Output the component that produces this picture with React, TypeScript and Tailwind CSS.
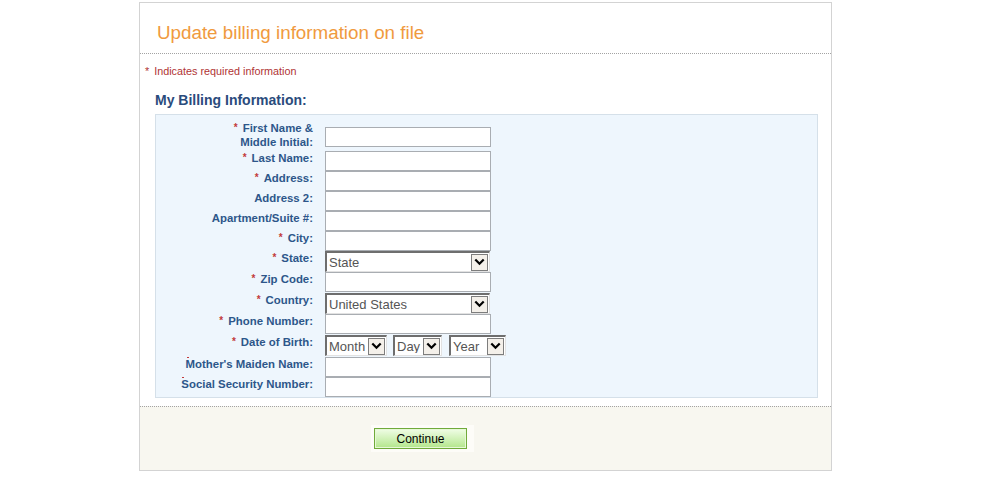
import React from 'react';

const Req = () => (
  <span className="text-[10px] text-[#c23a3a] mr-[5px] align-[1px]">*</span>
);

const TextBox = () => (
  <div className="w-[166px] h-[20px] border border-[#a9adb2] bg-white" />
);

interface SelectProps {
  value: string;
  width: string;
}

const FakeSelect = ({ value, width }: SelectProps) => {
  return (
    <div
      className={`${width} h-[21px] flex items-center bg-white border-t-2 border-l-2 border-r border-b border-t-[#6e6e6e] border-l-[#6e6e6e] border-r-[#e2e2e2] border-b-[#e2e2e2]`}
    >
      <span className="flex-1 pl-[2px] text-[13px] leading-none text-[#555] whitespace-nowrap overflow-hidden">
        {value}
      </span>
      <span className="w-[17px] h-[17px] mr-px flex items-center justify-center border border-[#7d7d7d] bg-[#f4f0ea]">
        <svg width="11" height="8" viewBox="0 0 11 8">
          <path d="M1.3 1.5 L5.5 5.8 L9.7 1.5" fill="none" stroke="#000" strokeWidth="2.2" />
        </svg>
      </span>
    </div>
  );
};

interface RowProps {
  label: React.ReactNode;
  required?: boolean;
  height: string;
  children: React.ReactNode;
}

const Row = ({ label, required, height, children }: RowProps) => (
  <div className={`flex items-start gap-[12px] ${height}`}>
    <div className="w-[157px] text-right font-bold text-[11.4px] leading-[14px] text-[#2d568a] whitespace-nowrap">
      {required && <Req />}
      {label}
    </div>
    {children}
  </div>
);

const HiddenMark = ({ children }: { children: React.ReactNode }) => (
  <span className="relative">
    <span className="absolute left-[1px] top-[-1px] w-[2px] h-[1px] bg-[#c23a3a]" />
    {children}
  </span>
);

export default function App() {
  return (
    <div className="min-h-screen bg-white font-['Liberation_Sans',Arial,sans-serif]">
      <div className="ml-[139px] pt-[2px] w-[693px]">
        <div className="border border-[#d3d3d3] bg-white">
          <div className="h-[51px] pl-[17px] pt-[19px] border-b border-dotted border-[#a3a3a3]">
            <h1 className="text-[18.8px] leading-[22px] text-[#f09a3e]">
              Update billing information on file
            </h1>
          </div>

          <p className="mt-[11px] pl-[5px] text-[10.8px] leading-[13px] text-[#b03434]">
            <span className="mr-[5px]">*</span>Indicates required information
          </p>

          <h2 className="mt-[14px] pl-[15px] text-[14px] leading-[16px] font-bold text-[#2a4b7c]">
            My Billing Information:
          </h2>

          <div className="mt-[6px] ml-[15px] w-[663px] border border-[#d5e0e9] bg-[#eef6fd] pt-[6px]">
            <div className="flex items-start gap-[12px] h-[30px]">
              <div className="w-[157px] text-right font-bold text-[11.4px] leading-[14px] text-[#2d568a]">
                <Req />
                First Name &amp;
                <br />
                Middle Initial:
              </div>
              <div className="mt-[6px]">
                <TextBox />
              </div>
            </div>
            <Row label="Last Name:" required height="h-[20px]">
              <TextBox />
            </Row>
            <Row label="Address:" required height="h-[20px]">
              <TextBox />
            </Row>
            <Row label="Address 2:" height="h-[20px]">
              <TextBox />
            </Row>
            <Row label="Apartment/Suite #:" height="h-[20px]">
              <TextBox />
            </Row>
            <Row label="City:" required height="h-[20px]">
              <TextBox />
            </Row>
            <Row label="State:" required height="h-[21px]">
              <FakeSelect value="State" width="w-[165px]" />
            </Row>
            <Row label="Zip Code:" required height="h-[21px]">
              <TextBox />
            </Row>
            <Row label="Country:" required height="h-[21px]">
              <FakeSelect value="United States" width="w-[165px]" />
            </Row>
            <Row label="Phone Number:" required height="h-[21px]">
              <TextBox />
            </Row>
            <Row label="Date of Birth:" required height="h-[22px]">
              <div className="flex items-start">
                <FakeSelect value="Month" width="w-[62px]" />
                <div className="ml-[6px]">
                  <FakeSelect value="Day" width="w-[49px]" />
                </div>
                <div className="ml-[7px]">
                  <FakeSelect value="Year" width="w-[57px]" />
                </div>
              </div>
            </Row>
            <Row label={<HiddenMark>Mother's Maiden Name:</HiddenMark>} height="h-[20px]">
              <TextBox />
            </Row>
            <Row label={<HiddenMark>Social Security Number:</HiddenMark>} height="h-[20px]">
              <TextBox />
            </Row>
          </div>

          <div className="mt-[8px] h-[64px] border-t border-dotted border-[#a3a3a3] bg-[#f8f7f0] pt-[18px]">
            <div className="ml-[231px] w-[103px] p-[3px] bg-[#fdfcf8]">
              <button className="block w-[93px] h-[21px] border border-[#70aa3a] bg-gradient-to-b from-[#f0fde6] to-[#b3e68a] shadow-[inset_0_0_0_1px_#e6f8d6] text-[12px] leading-none text-black font-['Liberation_Sans',Arial,sans-serif]">
                Continue
              </button>
            </div>
          </div>
        </div>
      </div>
    </div>
  );
}
